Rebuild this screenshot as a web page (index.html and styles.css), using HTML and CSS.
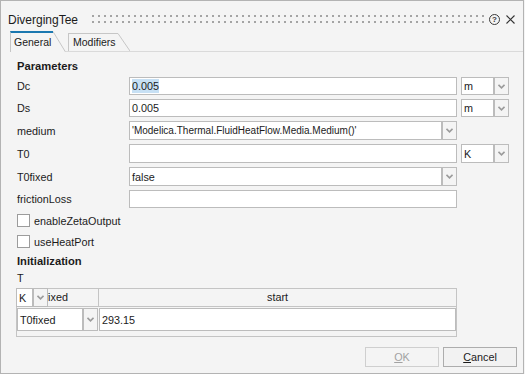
FILE: index.html
```html
<!DOCTYPE html>
<html lang="en">
<head>
    <meta charset="UTF-8">
    <title>DivergingTee</title>
    <link rel="stylesheet" href="styles.css">
</head>
<body>
    <div class="window">
        <!-- Barra de título -->
        <div class="titlebar">
            <span class="title">DivergingTee</span>
            <span class="grip"></span>
            <span class="help">?</span>
            <svg class="close" width="9" height="9" viewBox="0 0 9 9">
                <path d="M0.5 0.5 L8.5 8.5 M8.5 0.5 L0.5 8.5" stroke="#333" stroke-width="1.1" fill="none"/>
            </svg>
        </div>

        <!-- Abas -->
        <div class="tabs">
            <div class="tab active">
                <span class="tab-label">General</span>
                <svg class="slant" width="13" height="21" viewBox="0 0 13 21"><path d="M0 0.5 L12.5 21" stroke="#c6c6c6" fill="none"/></svg>
            </div>
            <div class="tab">
                <span class="tab-label">Modifiers</span>
                <svg class="slant" width="12" height="18" viewBox="0 0 12 18"><path d="M0 0.5 L12 18" stroke="#c6c6c6" fill="none"/></svg>
            </div>
            <div class="tab-rest"></div>
        </div>

        <div class="panel">
            <div class="group-title">Parameters</div>

            <div class="params">
                <div class="label">Dc</div>
                <div class="field"><span class="selected">0.005</span></div>
                <div class="combo">
                    <div class="field">m</div>
                    <div class="drop"><svg width="7" height="5" viewBox="0 0 7 5"><path d="M0.5 0.8 L3.5 3.8 L6.5 0.8" stroke="#9b9b9b" stroke-width="1.6" fill="none"/></svg></div>
                </div>

                <div class="label">Ds</div>
                <div class="field">0.005</div>
                <div class="combo">
                    <div class="field">m</div>
                    <div class="drop"><svg width="7" height="5" viewBox="0 0 7 5"><path d="M0.5 0.8 L3.5 3.8 L6.5 0.8" stroke="#9b9b9b" stroke-width="1.6" fill="none"/></svg></div>
                </div>

                <div class="label">medium</div>
                <div class="combo">
                    <div class="field long">'Modelica.Thermal.FluidHeatFlow.Media.Medium()'</div>
                    <div class="drop"><svg width="7" height="5" viewBox="0 0 7 5"><path d="M0.5 0.8 L3.5 3.8 L6.5 0.8" stroke="#9b9b9b" stroke-width="1.6" fill="none"/></svg></div>
                </div>
                <div></div>

                <div class="label">T0</div>
                <div class="field"></div>
                <div class="combo">
                    <div class="field">K</div>
                    <div class="drop"><svg width="7" height="5" viewBox="0 0 7 5"><path d="M0.5 0.8 L3.5 3.8 L6.5 0.8" stroke="#9b9b9b" stroke-width="1.6" fill="none"/></svg></div>
                </div>

                <div class="label">T0fixed</div>
                <div class="combo">
                    <div class="field">false</div>
                    <div class="drop"><svg width="7" height="5" viewBox="0 0 7 5"><path d="M0.5 0.8 L3.5 3.8 L6.5 0.8" stroke="#9b9b9b" stroke-width="1.6" fill="none"/></svg></div>
                </div>
                <div></div>

                <div class="label">frictionLoss</div>
                <div class="field"></div>
                <div></div>
            </div>

            <div class="check-row first"><span class="box"></span>enableZetaOutput</div>
            <div class="check-row"><span class="box"></span>useHeatPort</div>

            <div class="group-title init">Initialization</div>
            <div class="sub-label">T</div>

            <!-- Tabela de inicialização -->
            <div class="table">
                <div class="thead">
                    <div class="th first">fixed</div>
                    <div class="th">start</div>
                </div>
                <div class="unit-overlay">
                    <div class="field">K</div>
                    <div class="drop"><svg width="7" height="5" viewBox="0 0 7 5"><path d="M0.5 0.8 L3.5 3.8 L6.5 0.8" stroke="#9b9b9b" stroke-width="1.6" fill="none"/></svg></div>
                </div>
                <div class="trow">
                    <div class="td first">
                        <div class="combo">
                            <div class="field">T0fixed</div>
                            <div class="drop"><svg width="7" height="5" viewBox="0 0 7 5"><path d="M0.5 0.8 L3.5 3.8 L6.5 0.8" stroke="#9b9b9b" stroke-width="1.6" fill="none"/></svg></div>
                        </div>
                    </div>
                    <div class="td"><div class="field">293.15</div></div>
                </div>
                <div class="tfoot"></div>
            </div>
        </div>

        <div class="buttons">
            <button class="btn disabled"><u>O</u>K</button>
            <button class="btn"><u>C</u>ancel</button>
        </div>
    </div>
</body>
</html>
```

FILE: styles.css
```css
/* Estilos gerais */
* {
    box-sizing: border-box;
}

body {
    margin: 0;
    background: #f4f4f4;
    font-family: "Liberation Sans", Arial, sans-serif;
    font-size: 10.8px;
    color: #1b1b1b;
}

.window {
    width: 524px;
    height: 374px;
    border: 1px solid #b3b3b3;
    background: #f4f4f4;
    display: flex;
    flex-direction: column;
}

/* Barra de título */
.titlebar {
    height: 30px;
    padding: 6px 8px 0 7px;
    display: flex;
    align-items: center;
}

.title {
    font-size: 12px;
    line-height: 14px;
    margin-top: 2px;
}

.grip {
    flex: 1;
    height: 12px;
    margin: 0 4px 0 12px;
    background-image: radial-gradient(circle at 3px 3px, #a4a4a4 0.9px, transparent 1.3px);
    background-size: 6px 6px;
}

.help {
    width: 11px;
    height: 11px;
    border: 1px solid #3a3a3a;
    border-radius: 50%;
    font-size: 8px;
    font-weight: bold;
    line-height: 9px;
    text-align: center;
    color: #3a3a3a;
    margin-right: 6px;
}

/* Abas */
.tabs {
    display: flex;
    align-items: flex-end;
    height: 21px;
    padding-left: 9px;
}

.tab {
    display: flex;
    align-items: flex-end;
    height: 19px;
    border-bottom: 1px solid #dadada;
    padding-left: 2px;
}

.tab.active {
    height: 21px;
    border-bottom: none;
    padding-left: 0;
}

.tab-label {
    height: 18px;
    width: 50px;
    border-left: 1px solid #c6c6c6;
    border-top: 1px solid #c6c6c6;
    padding-left: 4px;
    font-size: 10.5px;
    line-height: 17px;
}

.tab.active .tab-label {
    height: 21px;
    width: 43px;
    border-top: 2px solid #1b78b0;
    padding-left: 3px;
    line-height: 18px;
}

.slant {
    display: block;
}

.tab-rest {
    flex: 1;
    height: 1px;
    border-bottom: 1px solid #dadada;
}

/* Painel */
.panel {
    flex: 1;
    padding: 7px 0 0 16px;
}

.group-title {
    font-weight: bold;
    font-size: 11.2px;
    height: 14px;
    line-height: 14px;
}

.params {
    display: grid;
    grid-template-columns: 108px 328px 48px;
    grid-template-rows: 18px 18px 19px 19px 19px 18px;
    column-gap: 4px;
    row-gap: 4px;
    margin-top: 4px;
}

.label {
    display: flex;
    align-items: center;
}

.field {
    border: 1px solid #bcbcbc;
    background: #fff;
    padding-left: 2px;
    display: flex;
    align-items: center;
    white-space: nowrap;
    overflow: hidden;
}

.field.long {
    font-size: 10px;
}

.selected {
    background: #c7e0f4;
    padding: 1px 0;
}

.combo {
    display: flex;
}

.combo .field {
    flex: 1;
}

.drop {
    width: 15px;
    border: 1px solid #bcbcbc;
    background: #f4f4f4;
    display: flex;
    align-items: center;
    justify-content: center;
}

.check-row {
    height: 21px;
    display: flex;
    align-items: center;
}

.check-row.first {
    margin-top: 2px;
}

.box {
    width: 13px;
    height: 13px;
    border: 1px solid #9c9c9c;
    background: #fff;
    margin-right: 4px;
}

.init {
    margin-top: 2px;
}

.sub-label {
    height: 14px;
    line-height: 14px;
    margin-top: 3px;
}

/* Tabela */
.table {
    position: relative;
    width: 441px;
    margin: 3px 0 0 -1px;
    border: 1px solid #c4c4c4;
}

.thead {
    display: grid;
    grid-template-columns: 82px 1fr;
    height: 18px;
    border-bottom: 1px solid #c4c4c4;
}

.th {
    text-align: center;
    line-height: 17px;
}

.th.first {
    border-right: 1px solid #c4c4c4;
    padding-right: 2px;
}

.unit-overlay {
    position: absolute;
    top: -1px;
    left: -1px;
    height: 19px;
    display: flex;
}

.unit-overlay .field {
    width: 17px;
}

.trow {
    display: grid;
    grid-template-columns: 82px 1fr;
    height: 24px;
}

.td {
    display: flex;
    padding-top: 1px;
}

.td.first {
    padding-right: 1px;
}

.td .combo,
.td .field {
    flex: 1;
}

.tfoot {
    height: 5px;
}

/* Botões */
.buttons {
    display: flex;
    justify-content: flex-end;
    gap: 4px;
    padding: 0 6px 6px 0;
}

.btn {
    width: 74px;
    height: 20px;
    border: 1px solid #adadad;
    background: #f2f2f2;
    font-family: inherit;
    font-size: 10.8px;
    color: #1b1b1b;
    padding: 0;
}

.btn.disabled {
    border-color: #cfcfcf;
    background: #f4f4f4;
    color: #a2a2a2;
}
```
